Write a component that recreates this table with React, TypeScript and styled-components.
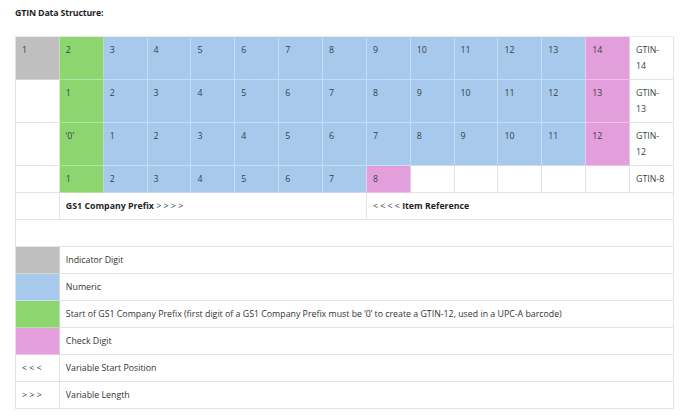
import React from "react";
import styled, { createGlobalStyle } from "styled-components";

const Global = createGlobalStyle`
  html, body { margin: 0; padding: 0; background: #ffffff; }
  body { font-family: "Open Sans", "Noto Sans", sans-serif; color: #333; }
`;

const Page = styled.div`
  padding: 5px 14px 0 15px;
  width: 659px;
`;

const Title = styled.h4`
  margin: 0 0 15px 0;
  font-size: 8.8px;
  font-weight: 700;
  line-height: 16px;
  color: #1f1f1f;
  letter-spacing: -0.15px;
`;

const Table = styled.table`
  width: 659px;
  table-layout: fixed;
  border-collapse: separate;
  border-spacing: 0;
  border-left: 1px solid #e2e2e2;
  font-size: 8.8px;
`;

type Kind = "gray" | "green" | "blue" | "pink" | "white";

const bgs: Record<Kind, string> = {
  gray: "#bfbfbf",
  green: "#8dd56f",
  blue: "#a6c9ec",
  pink: "#e29fdb",
  white: "#ffffff",
};

const lines: Record<Kind, string> = {
  gray: "#d4d4d4",
  green: "#b5e3a2",
  blue: "#c8ddf3",
  pink: "#eec2e9",
  white: "#e4e4e4",
};

const Cell = styled.td<{ $k?: Kind }>`
  background: ${(p) => bgs[p.$k ?? "white"]};
  border-right: 1px solid ${(p) => lines[p.$k ?? "white"]};
  border-bottom: 1px solid ${(p) => lines[p.$k ?? "white"]};
  padding: 5px 6px 5px 6px;
  line-height: 16px;
  vertical-align: top;
  color: #3a3f46;
  font-weight: 400;
  white-space: normal;
`;

const TopRow = styled.tr`
  & > td { border-top: 1px solid #eaeaea; }
`;

const Bold = styled.strong`
  font-weight: 700;
  color: #1f1f1f;
`;

const EmptyRow = styled.td`
  height: 16px;
  padding: 5px 6px;
  border-right: 1px solid #e4e4e4;
  border-bottom: 1px solid #e4e4e4;
`;

const LegendText = styled(Cell)`
  color: #333;
`;

const range = (a: number, b: number) => {
  const r: number[] = [];
  for (let i = a; i <= b; i++) r.push(i);
  return r;
};

const Row: React.FC<{ cells: [Kind, string][] }> = ({ cells }) => (
  <tr>
    {cells.map(([k, t], i) => (
      <Cell key={i} $k={k}>
        {t}
      </Cell>
    ))}
  </tr>
);

const blues = (a: number, b: number): [Kind, string][] =>
  range(a, b).map((n) => ["blue", String(n)] as [Kind, string]);

const legend: [Kind, string, string][] = [
  ["gray", "", "Indicator Digit"],
  ["blue", "", "Numeric"],
  [
    "green",
    "",
    "Start of GS1 Company Prefix (first digit of a GS1 Company Prefix must be \u20180\u2019 to create a GTIN-12, used in a UPC-A barcode)",
  ],
  ["pink", "", "Check Digit"],
  ["white", "< < <", "Variable Start Position"],
  ["white", "> > >", "Variable Length"],
];

export default function App() {
  return (
    <>
      <Global />
      <Page>
        <Title>GTIN Data Structure:</Title>
        <Table>
          <colgroup>
            {range(1, 15).map((i) => (
              <col key={i} />
            ))}
          </colgroup>
          <tbody>
            <TopRow>
              <Cell $k="gray">1</Cell>
              <Cell $k="green">2</Cell>
              {blues(3, 13).map(([k, t], i) => (
                <Cell key={i} $k={k}>
                  {t}
                </Cell>
              ))}
              <Cell $k="pink">14</Cell>
              <Cell>GTIN-14</Cell>
            </TopRow>
            <Row
              cells={[
                ["white", ""],
                ["green", "1"],
                ...blues(2, 12),
                ["pink", "13"],
                ["white", "GTIN-13"],
              ]}
            />
            <Row
              cells={[
                ["white", ""],
                ["green", "\u20180\u2019"],
                ...blues(1, 11),
                ["pink", "12"],
                ["white", "GTIN-12"],
              ]}
            />
            <Row
              cells={[
                ["white", ""],
                ["green", "1"],
                ...blues(2, 7),
                ["pink", "8"],
                ["white", ""],
                ["white", ""],
                ["white", ""],
                ["white", ""],
                ["white", ""],
                ["white", "GTIN-8"],
              ]}
            />
            <tr>
              <Cell />
              <Cell colSpan={7}>
                <Bold>GS1 Company Prefix</Bold> &gt; &gt; &gt; &gt;
              </Cell>
              <Cell colSpan={7}>
                &lt; &lt; &lt; &lt; <Bold>Item Reference</Bold>
              </Cell>
            </tr>
            <tr>
              <EmptyRow colSpan={15} />
            </tr>
            {legend.map(([k, sym, text], i) => (
              <tr key={i}>
                <Cell $k={k}>{sym}</Cell>
                <LegendText colSpan={14}>{text}</LegendText>
              </tr>
            ))}
          </tbody>
        </Table>
      </Page>
    </>
  );
}
